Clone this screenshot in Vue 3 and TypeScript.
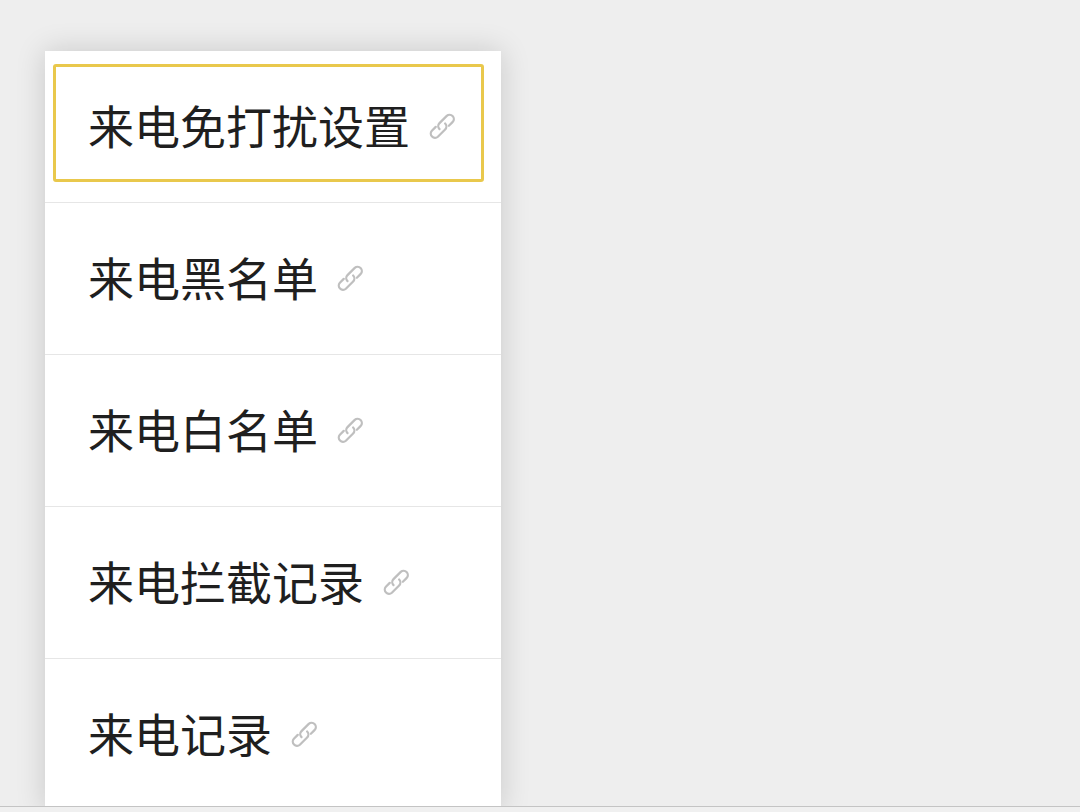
<script setup lang="ts">
const rows: { label: string; selected?: boolean }[] = [
  { label: '来电免打扰设置', selected: true },
  { label: '来电黑名单' },
  { label: '来电白名单' },
  { label: '来电拦截记录' },
  { label: '来电记录' },
]
</script>

<template>
  <div class="page">
    <main class="stage">
      <ul class="card">
        <li v-for="row in rows" :key="row.label" class="row">
          <span v-if="row.selected" class="focus"></span>
          <span class="label">{{ row.label }}</span>
          <svg class="link" viewBox="0 0 24 24" fill="none" stroke="#bfbfbf" stroke-width="1.8" stroke-linecap="round" aria-hidden="true">
            <path d="M10 14.5A3.4 3.4 0 0 1 10 9.7L15.8 3.9A3.4 3.4 0 0 1 20.6 8.7L17.5 11.8" />
            <path d="M14.5 10A3.4 3.4 0 0 1 14.5 14.8L8.7 20.6A3.4 3.4 0 0 1 3.9 15.8L7 12.7" />
          </svg>
        </li>
      </ul>
    </main>
    <div class="baseline"></div>
  </div>
</template>

<style>
html, body { margin: 0; background: #eeeeee; }
</style>

<style scoped>
.page {
  height: 812px;
  display: flex;
  flex-direction: column;
  background: #eeeeee;
  overflow: hidden;
}
.stage {
  height: 806px;
  padding: 51px 0 0 45px;
  box-sizing: border-box;
  overflow: hidden;
  flex: none;
}
.card {
  width: 456px;
  height: 760px;
  margin: 0;
  padding: 0;
  list-style: none;
  background: #ffffff;
  box-shadow: 0 0 28px rgba(0, 0, 0, 0.16);
}
.row {
  position: relative;
  display: flex;
  align-items: center;
  gap: 17px;
  height: 152px;
  padding: 0 0 0 43px;
  box-sizing: border-box;
  border-bottom: 1px solid #e6e6e6;
}
.row:last-child {
  border-bottom: none;
}
.focus {
  position: absolute;
  left: 8px;
  top: 13px;
  width: 431px;
  height: 118px;
  box-sizing: border-box;
  border: 3px solid #e9c84c;
  border-radius: 3px;
}
.label {
  margin-bottom: 6px;
  font-family: "Noto Sans CJK SC", "Noto Sans", sans-serif;
  font-size: 46px;
  line-height: 60px;
  color: #1f1f1f;
  white-space: nowrap;
}
.link {
  width: 30px;
  height: 30px;
  margin-bottom: 2px;
  flex: none;
}
.baseline {
  flex: 1;
  background: #f0f0f0;
  border-top: 1px solid #c4c4c4;
}
</style>
